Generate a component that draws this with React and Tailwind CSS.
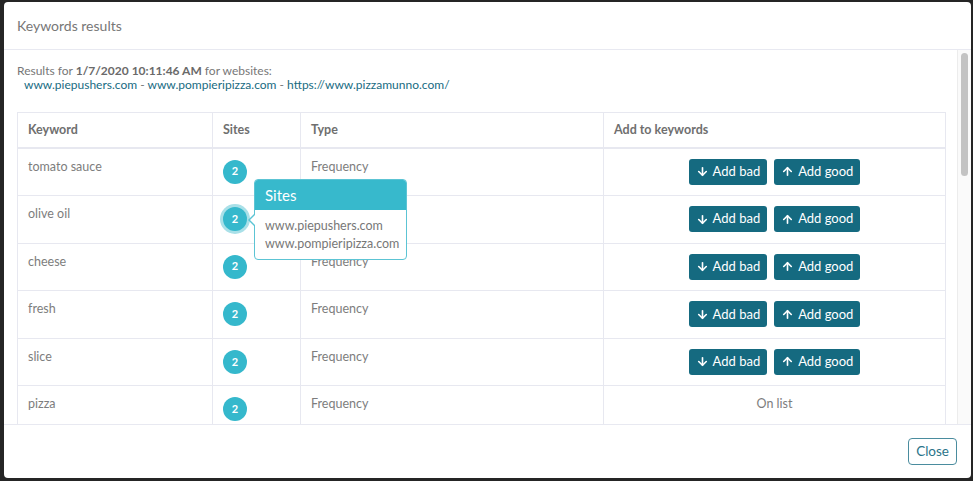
import React from "react";
import { ArrowDown, ArrowUp } from "lucide-react";

const rows = [
  { k: "tomato sauce", list: false },
  { k: "olive oil", list: false, tip: true },
  { k: "cheese", list: false },
  { k: "fresh", list: false },
  { k: "slice", list: false },
  { k: "pizza", list: true },
  { k: "crust", list: false },
];

function Badge({ focused }) {
  return (
    <div
      className={
        "w-[24px] h-[24px] rounded-full bg-[#35b8cc] text-white text-[11px] font-bold flex items-center justify-center " +
        (focused ? "shadow-[0_0_0_3px_#a9e0e8]" : "")
      }
    >
      2
    </div>
  );
}

function Tooltip() {
  return (
    <div className="absolute left-[31px] top-[-28px] z-20 w-[153px] rounded-[4px] border border-[#5cc4d4] bg-white">
      <div className="absolute left-[-7px] top-[33px] w-0 h-0 border-y-[7px] border-y-transparent border-r-[7px] border-r-[#5cc4d4]" />
      <div className="absolute left-[-5px] top-[34px] w-0 h-0 border-y-[6px] border-y-transparent border-r-[6px] border-r-white" />
      <div className="h-[30px] bg-[#37b9cc] rounded-t-[3px] flex items-center pl-[10px] text-white text-[15px]">
        Sites
      </div>
      <div className="pl-[10px] pt-[7px] pb-[6px] text-[12.5px] leading-[18px] text-[#777]">
        <div>www.piepushers.com</div>
        <div>www.pompieripizza.com</div>
      </div>
    </div>
  );
}

function Btn({ children, icon }) {
  return (
    <button className="h-[26px] px-[7px] rounded-[3px] bg-[#156a80] text-white text-[13px] flex items-center gap-[4px]">
      {icon}
      {children}
    </button>
  );
}

export default function App() {
  return (
    <div
      className="w-[973px] h-[481px] bg-[#252525] pt-[2px] pl-[4px] pr-[2px] pb-[3px] overflow-hidden"
      style={{ fontFamily: "Lato, 'Open Sans', sans-serif" }}
    >
      <div className="w-[967px] h-[476px] bg-white rounded-[4px] flex flex-col overflow-hidden">
        <div className="h-[48px] shrink-0 flex items-center px-[13px] border-b border-[#e8e9f1]">
          <h2 className="text-[14px] text-[#777]">Keywords results</h2>
        </div>
        <div className="flex-1 min-h-0 flex">
          <div className="flex-1 min-w-0 overflow-hidden">
            <div className="pl-[13px] pr-[13px] pt-[14px] pb-[16px]">
              <div className="text-[12px] leading-[14px] text-[#777]">
                Results for <span className="font-bold text-[#6a6a6a]">1/7/2020 10:11:46 AM</span> for websites:
              </div>
              <div className="text-[12px] leading-[14px] pl-[7px] text-[#777]">
                <span className="text-[#176b82]">www.piepushers.com</span> -{" "}
                <span className="text-[#176b82]">www.pompieripizza.com</span> -{" "}
                <span className="text-[#176b82]">https://www.pizzamunno.com/</span>
              </div>
              <table className="mt-[20px] w-[928px] table-fixed border-collapse border border-[#e7e8f0] text-[12.5px] text-[#7d7d7d]">
                <colgroup>
                  <col className="w-[195px]" />
                  <col className="w-[88px]" />
                  <col className="w-[303px]" />
                  <col className="w-[342px]" />
                </colgroup>
                <thead>
                  <tr className="h-[35px] border-b-2 border-[#e7e8f0] text-left text-[#6f6f6f]">
                    <th className="font-bold px-[10px] pt-[2px] border-r border-[#e7e8f0]">Keyword</th>
                    <th className="font-bold px-[10px] pt-[2px] border-r border-[#e7e8f0]">Sites</th>
                    <th className="font-bold px-[10px] pt-[2px] border-r border-[#e7e8f0]">Type</th>
                    <th className="font-bold px-[10px] pt-[2px]">Add to keywords</th>
                  </tr>
                </thead>
                <tbody>
                  {rows.map((r, i) => (
                    <tr key={i} className="border-b border-[#e7e8f0]">
                      <td className="align-top px-[10px] pt-[10px] pb-[10.6px] leading-[16px] border-r border-[#e7e8f0]">
                        {r.k}
                      </td>
                      <td className="align-top px-[10px] pt-[11px] pb-[10.6px] border-r border-[#e7e8f0]">
                        <div className="relative w-[24px]">
                          <Badge focused={r.tip} />
                          {r.tip && <Tooltip />}
                        </div>
                      </td>
                      <td className="align-top px-[10px] pt-[10px] pb-[10.6px] leading-[16px] border-r border-[#e7e8f0]">
                        Frequency
                      </td>
                      <td className="align-top px-[10px] pt-[10px] pb-[10.6px]">
                        {r.list ? (
                          <div className="text-center leading-[16px]">On list</div>
                        ) : (
                          <div className="flex justify-center gap-[7px]">
                            <Btn icon={<ArrowDown size={13} strokeWidth={3} />}>Add bad</Btn>
                            <Btn icon={<ArrowUp size={13} strokeWidth={3} />}>Add good</Btn>
                          </div>
                        )}
                      </td>
                    </tr>
                  ))}
                </tbody>
              </table>
            </div>
          </div>
          <div className="w-[14px] shrink-0 bg-[#fafafa] border-l border-[#ececec] pt-[3px] pl-[3px] pr-[3px]">
            <div className="h-[123px] w-[7px] rounded-full bg-[#c3c3c3]" />
          </div>
        </div>
        <div className="h-[54px] shrink-0 border-t border-[#e8e9f1] flex items-center justify-end pr-[14px]">
          <button className="h-[27px] px-[7px] rounded-[4px] border border-[#4a8c9e] text-[#2a7489] text-[13.5px]">
            Close
          </button>
        </div>
      </div>
    </div>
  );
}
